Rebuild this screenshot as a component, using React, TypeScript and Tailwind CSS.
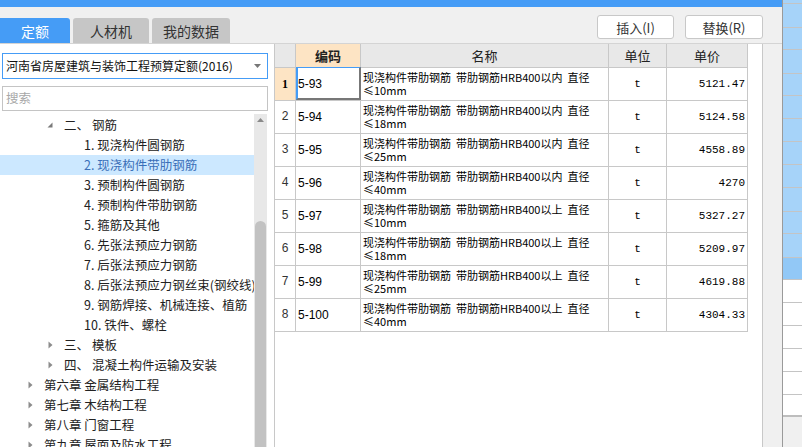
import React from "react";

const rows = [
  { n: "1", code: "5-93", kind: "以内", d: "10", price: "5121.47" },
  { n: "2", code: "5-94", kind: "以内", d: "18", price: "5124.58" },
  { n: "3", code: "5-95", kind: "以内", d: "25", price: "4558.89" },
  { n: "4", code: "5-96", kind: "以内", d: "40", price: "4270" },
  { n: "5", code: "5-97", kind: "以上", d: "10", price: "5327.27" },
  { n: "6", code: "5-98", kind: "以上", d: "18", price: "5209.97" },
  { n: "7", code: "5-99", kind: "以上", d: "25", price: "4619.88" },
  { n: "8", code: "5-100", kind: "以上", d: "40", price: "4304.33" },
];

const items = [
  "1. 现浇构件圆钢筋",
  "2. 现浇构件带肋钢筋",
  "3. 预制构件圆钢筋",
  "4. 预制构件带肋钢筋",
  "5. 箍筋及其他",
  "6. 先张法预应力钢筋",
  "7. 后张法预应力钢筋",
  "8. 后张法预应力钢丝束(钢绞线)",
  "9. 钢筋焊接、机械连接、植筋",
  "10. 铁件、螺栓",
];

const chapters = ["第六章 金属结构工程", "第七章 木结构工程", "第八章 门窗工程", "第九章 屋面及防水工程"];

const sideRows = [
  "h-[3px] bg-[#a6d3f9]",
  "h-[24px] bg-[#a6d3f9] border-t border-[#c4c4c4]",
  "h-[22px] bg-[#a6d3f9] border-t border-[#c4c4c4]",
  "h-[24px] bg-[#a6d3f9] border-t border-[#c4c4c4]",
  "h-[22px] bg-[#a6d3f9] border-t border-[#c4c4c4]",
  "h-[23px] bg-[#a6d3f9] border-t border-[#c4c4c4]",
  "h-[23px] bg-[#a6d3f9] border-t border-[#c4c4c4]",
  "h-[23px] bg-[#a6d3f9] border-t border-[#c4c4c4]",
  "h-[23px] bg-[#a6d3f9] border-t border-[#c4c4c4]",
  "h-[24px] bg-[#a6d3f9] border-t border-[#c4c4c4]",
  "h-[22px] bg-[#a6d3f9] border-t border-[#c4c4c4]",
  "h-[24px] bg-[#a6d3f9] border-t border-[#c4c4c4]",
  "h-[22px] bg-[#92c8f6] border-t border-[#c4c4c4]",
  "h-[23px] bg-white border-t border-[#c4c4c4]",
  "h-[23px] bg-white border-t border-[#c4c4c4]",
  "h-[23px] bg-white border-t border-[#c4c4c4]",
  "h-[23px] bg-white border-t border-[#c4c4c4]",
  "h-[23px] bg-white border-t border-[#c4c4c4]",
  "h-[21px] bg-white border-t border-[#c4c4c4]",
];

function Collapsed() {
  return (
    <svg width="5" height="8" viewBox="0 0 5 8" className="shrink-0">
      <path d="M0.5 0.5 L4.5 4 L0.5 7.5 Z" fill="#8c8c8c" />
    </svg>
  );
}

function Expanded() {
  return (
    <svg width="6" height="6" viewBox="0 0 6 6" className="shrink-0">
      <path d="M5.5 0.5 L5.5 5.5 L0.5 5.5 Z" fill="#7a7a7a" />
    </svg>
  );
}

const cjk = "font-['Noto_Sans_CJK_SC','Microsoft_YaHei',sans-serif]";
const mono = "font-['Liberation_Mono',monospace]";

export default function App() {
  return (
    <div className={`w-[802px] h-[447px] overflow-hidden flex bg-[#f0f0f0] ${cjk} text-[#222]`}>
      <div className="w-[782px] flex flex-col">
        <div className="h-[7px] bg-[#459cf6] shrink-0" />
        {/* toolbar */}
        <div className="h-[37px] shrink-0 flex border-b border-[#d4d4d4]">
          <div className="w-[274px] flex items-end gap-[3px]">
            <div className="w-[70px] h-[25px] bg-[#459cf6] rounded-tr-[3px] flex items-center justify-center text-white text-[14px] leading-none">
              定额
            </div>
            <div className="w-[76px] h-[25px] bg-[#c6c6c6] rounded-t-[3px] flex items-center justify-center text-[#333] text-[14px] leading-none">
              人材机
            </div>
            <div className="w-[78px] h-[25px] bg-[#c6c6c6] rounded-t-[3px] flex items-center justify-center text-[#333] text-[14px] leading-none">
              我的数据
            </div>
          </div>
          <div className="flex-1 flex justify-end items-start pt-[8px] pr-[19px] gap-[11px]">
            <div className="w-[77px] h-[24px] bg-white border border-[#c8c8c8] rounded-[3px] flex items-center justify-center text-[13px] text-[#333] leading-none">
              插入(I)
            </div>
            <div className="w-[78px] h-[24px] bg-white border border-[#c8c8c8] rounded-[3px] flex items-center justify-center text-[13px] text-[#333] leading-none">
              替换(R)
            </div>
          </div>
        </div>
        {/* body */}
        <div className="flex-1 flex min-h-0">
          {/* left panel */}
          <div className="w-[274px] bg-white flex flex-col min-h-0">
            <div className="mt-[9px] ml-[2px] w-[266px] h-[26px] border border-[#459cf6] flex items-center pl-[3px] pr-[6px] shrink-0">
              <span className="flex-1 text-[12px] leading-none text-[#111] whitespace-nowrap">河南省房屋建筑与装饰工程预算定额(2016)</span>
              <svg width="7" height="4" viewBox="0 0 7 4">
                <path d="M0 0 L7 0 L3.5 4 Z" fill="#777" />
              </svg>
            </div>
            <div className="mt-[7px] ml-[2px] w-[266px] h-[25px] border border-[#c4c4c4] flex items-center pl-[3px] shrink-0">
              <span className="text-[12.5px] leading-none text-[#a8a8a8]">搜索</span>
            </div>
            <div className="mt-[3px] flex-1 flex min-h-0">
              <div className="w-[254px] pt-[1px] overflow-hidden">
                <div className="h-[20px] flex items-center">
                  <div className="w-[47px]" />
                  <Expanded />
                  <div className="w-[11px]" />
                  <span className="w-[28px] text-[12.5px] leading-none">二、</span>
                  <span className="text-[12.5px] leading-none">钢筋</span>
                </div>
                {items.map((t, i) => (
                  <div
                    key={t}
                    className={`h-[20px] flex items-center pl-[84px] text-[12.5px] leading-none whitespace-nowrap ${
                      i === 1 ? "bg-[#cce8ff] text-[#3a6fb8]" : ""
                    }`}
                  >
                    {t}
                  </div>
                ))}
                {["三、|模板", "四、|混凝土构件运输及安装"].map((s) => {
                  const [a, b] = s.split("|");
                  return (
                    <div key={s} className="h-[20px] flex items-center">
                      <div className="w-[48px]" />
                      <Collapsed />
                      <div className="w-[11px]" />
                      <span className="w-[28px] text-[12.5px] leading-none">{a}</span>
                      <span className="text-[12.5px] leading-none whitespace-nowrap">{b}</span>
                    </div>
                  );
                })}
                {chapters.map((c) => (
                  <div key={c} className="h-[20px] flex items-center">
                    <div className="w-[28px]" />
                    <Collapsed />
                    <div className="w-[11px]" />
                    <span className="text-[12.5px] leading-none whitespace-nowrap">{c}</span>
                  </div>
                ))}
              </div>
              {/* scrollbar */}
              <div className="w-[13px] bg-[#e8e8e8] flex flex-col items-center">
                <svg width="7" height="4" viewBox="0 0 7 4" className="mt-[4px]">
                  <path d="M3.5 0 L7 4 L0 4 Z" fill="#8a8a8a" />
                </svg>
                <div className="mt-[99px] flex-1 w-[11px] bg-[#c2c2c2] rounded-t-full" />
              </div>
            </div>
          </div>
          {/* table */}
          <div className="w-[489px] bg-white border-l border-r border-[#c8c8c8] overflow-hidden">
            <div className="w-[473px] border-r border-[#c8c8c8]">
              <div className="h-[24px] flex bg-[#e8e8e8] border-b border-[#c8c8c8] text-[13px] leading-none text-[#222]">
                <div className="w-[21px] border-r border-[#c8c8c8]" />
                <div className="w-[65px] border-r border-[#c8c8c8] bg-[#fde4c4] flex items-center justify-center font-bold">编码</div>
                <div className="w-[248px] border-r border-[#c8c8c8] flex items-center justify-center">名称</div>
                <div className="w-[58px] border-r border-[#c8c8c8] flex items-center justify-center">单位</div>
                <div className="w-[80px] flex items-center justify-center">单价</div>
              </div>
              {rows.map((r, i) => (
                <div key={r.n} className="h-[33px] flex border-b border-[#c8c8c8] text-black">
                  <div
                    className={`w-[21px] border-r border-[#c8c8c8] flex items-center justify-center text-[12px] leading-none ${
                      i === 0 ? "bg-[#fde4c4] font-bold font-['Liberation_Serif',serif]" : `${mono} text-[#333]`
                    }`}
                  >
                    {r.n}
                  </div>
                  <div className="w-[65px] border-r border-[#c8c8c8] flex items-center pl-[2px] relative">
                    <span className="text-[12px] leading-none font-['Liberation_Sans',sans-serif]">{r.code}</span>
                    {i === 0 && (
                      <div className="absolute left-0 top-[-1px] right-[-1px] bottom-0 border-l-2 border-t border-l-[#459cf6] border-t-[#459cf6] border-r-2 border-b-2 border-r-[#777] border-b-[#777]" />
                    )}
                  </div>
                  <div className="w-[248px] border-r border-[#c8c8c8] flex flex-col justify-center pl-[2px] text-[11px] leading-[13px] whitespace-pre">
                    <span>{`现浇构件带肋钢筋  带肋钢筋HRB400${r.kind}  直径`}</span>
                    <span>{`≤${r.d}mm`}</span>
                  </div>
                  <div className={`w-[58px] border-r border-[#c8c8c8] flex items-center justify-center text-[11px] leading-none ${mono}`}>
                    t
                  </div>
                  <div className={`w-[80px] flex items-center justify-end pr-[2px] text-[11px] leading-none ${mono}`}>
                    {r.price}
                  </div>
                </div>
              ))}
            </div>
          </div>
          <div className="flex-1" />
        </div>
      </div>
      {/* right side panel */}
      <div className="w-[20px] border-l border-[#9a9a9a] flex flex-col">
        {sideRows.map((c, i) => (
          <div key={i} className={`${c} shrink-0`} />
        ))}
        <div className="flex-1 border-t-2 border-[#bdbdbd] bg-[#f0f0f0]" />
      </div>
    </div>
  );
}
